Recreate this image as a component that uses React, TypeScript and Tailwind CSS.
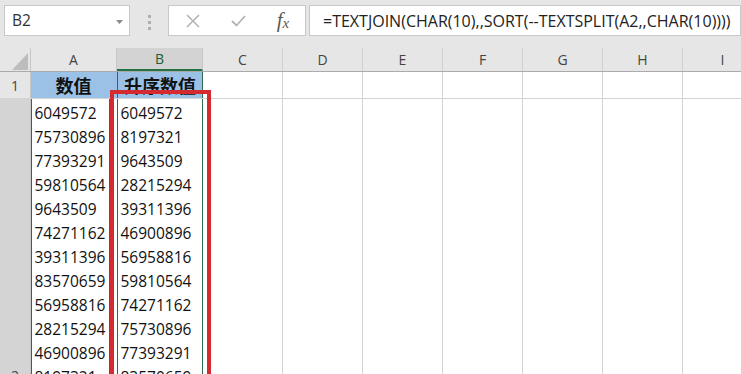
import React from "react";

const colsRest = ["C", "D", "E", "F", "G", "H", "I"];
const aData = ["6049572","75730896","77393291","59810564","9643509","74271162","39311396","83570659","56958816","28215294","46900896","8197321"];
const bData = ["6049572","8197321","9643509","28215294","39311396","46900896","56958816","59810564","74271162","75730896","77393291","83570659"];

export default function App() {
  return (
    <div className="relative w-[741px] h-[374px] overflow-hidden bg-white font-['Open_Sans',sans-serif] text-[#222]">
      {/* toolbar */}
      <div className="flex h-[48px] items-start bg-[#e6e6e6] pl-[4px] pt-[5px]">
        <div className="relative flex h-[31px] w-[126px] shrink-0 items-center border border-[#c8c8c8] bg-white pl-[7px] text-[15.5px] text-[#333]">
          B2
          <svg className="absolute left-[111px] top-[14px]" width="7" height="4" viewBox="0 0 7 4">
            <path d="M0 0 L7 0 L3.5 4 Z" fill="#8a8a8a" />
          </svg>
        </div>
        <div className="flex w-[38px] shrink-0 flex-col items-center gap-[3px] pt-[10px]">
          <div className="h-[3px] w-[3px] bg-[#b0b0b0]" />
          <div className="h-[3px] w-[3px] bg-[#b0b0b0]" />
          <div className="h-[3px] w-[3px] bg-[#b0b0b0]" />
        </div>
        <div className="flex h-[31px] w-[138px] shrink-0 items-center border border-[#c8c8c8] bg-white">
          <div className="flex w-[46px] justify-center pl-[2px]">
            <svg width="14" height="14" viewBox="0 0 14 14">
              <path d="M1 1 L13 13 M13 1 L1 13" stroke="#b4b4b4" strokeWidth="1.6" />
            </svg>
          </div>
          <div className="flex w-[46px] justify-center">
            <svg width="15" height="12" viewBox="0 0 15 12">
              <path d="M1 6 L5.5 10.5 L14 1" stroke="#b4b4b4" strokeWidth="1.8" fill="none" />
            </svg>
          </div>
          <div className="flex w-[44px] justify-center font-['Liberation_Serif',serif] text-[21px] italic leading-none text-[#5a5a5a]">
            f<span className="mt-[6px] text-[15px]">x</span>
          </div>
        </div>
        <div className="ml-[3px] flex h-[31px] flex-1 items-center border border-[#c8c8c8] bg-white pl-[13px] text-[16px] whitespace-nowrap text-[#222]">
          =TEXTJOIN(CHAR(10),,SORT(--TEXTSPLIT(A2,,CHAR(10))))
        </div>
      </div>

      {/* column headers */}
      <div className="flex h-[24px] border-b border-[#ababab] bg-[#e6e6e6] text-[14px] text-[#444]">
        <div className="relative w-[31px] shrink-0 border-r border-[#c6c6c6]">
          <svg className="absolute left-[12px] top-[5px]" width="16" height="17" viewBox="0 0 16 17">
            <path d="M16 0 L16 17 L0 17 Z" fill="#bdbdbd" />
          </svg>
        </div>
        <div className="flex w-[86px] shrink-0 items-center justify-center border-r border-[#c6c6c6]">A</div>
        <div className="flex w-[86px] shrink-0 items-center justify-center border-r border-b-2 border-r-[#c6c6c6] border-b-[#217346] bg-[#d3d3d3] text-[#1d5c3a]">B</div>
        {colsRest.map((c) => (
          <div key={c} className="flex w-[80px] shrink-0 items-center justify-center border-r border-[#d0d0d0]">{c}</div>
        ))}
      </div>

      {/* row 1 */}
      <div className="flex h-[27px] border-b border-[#d4d4d4]">
        <div className="flex w-[31px] shrink-0 items-center justify-center border-r border-[#c6c6c6] bg-[#e6e6e6] text-[14px] text-[#444]">1</div>
        <div className="flex w-[86px] shrink-0 items-center justify-center border-r border-[#9bc2e6] bg-[#9bc2e6] font-['Noto_Sans_CJK_SC',sans-serif] text-[18px] font-bold text-[#111]">数值</div>
        <div className="flex w-[86px] shrink-0 items-center justify-center border-x-[1.5px] border-[#2f6b4c] bg-[#9bc2e6] font-['Noto_Sans_CJK_SC',sans-serif] text-[18px] font-bold text-[#111]">升序数值</div>
        {colsRest.map((c) => (
          <div key={c} className="w-[80px] shrink-0 border-r border-[#d4d4d4]" />
        ))}
      </div>

      {/* row 2 */}
      <div className="flex">
        <div className="flex w-[31px] shrink-0 items-end justify-center border-r border-[#c6c6c6] bg-[#d4d4d4] pb-[3px] text-[14px] text-[#444]">2</div>
        <div className="flex w-[86px] shrink-0">
          <div className="w-[79px] border-x-[1.5px] border-[#2f6b4c] pl-[2.5px] pt-[1.5px] text-[15.5px] leading-[24px] text-[#111]">
            {aData.map((v, i) => (
              <div key={i}>{v}</div>
            ))}
          </div>
        </div>
        <div className="w-[86px] shrink-0 border-x-[1.5px] border-[#2f6b4c] pl-[2.5px] pt-[1.5px] text-[15.5px] leading-[24px] text-[#111]">
          {bData.map((v, i) => (
            <div key={i}>{v}</div>
          ))}
        </div>
        {colsRest.map((c) => (
          <div key={c} className="w-[80px] shrink-0 border-r border-[#d4d4d4]" />
        ))}
      </div>

      {/* red highlight rectangle */}
      <div className="absolute left-[110px] top-[90px] h-[320px] w-[101px] border-4 border-[#d42a30]" />
    </div>
  );
}
